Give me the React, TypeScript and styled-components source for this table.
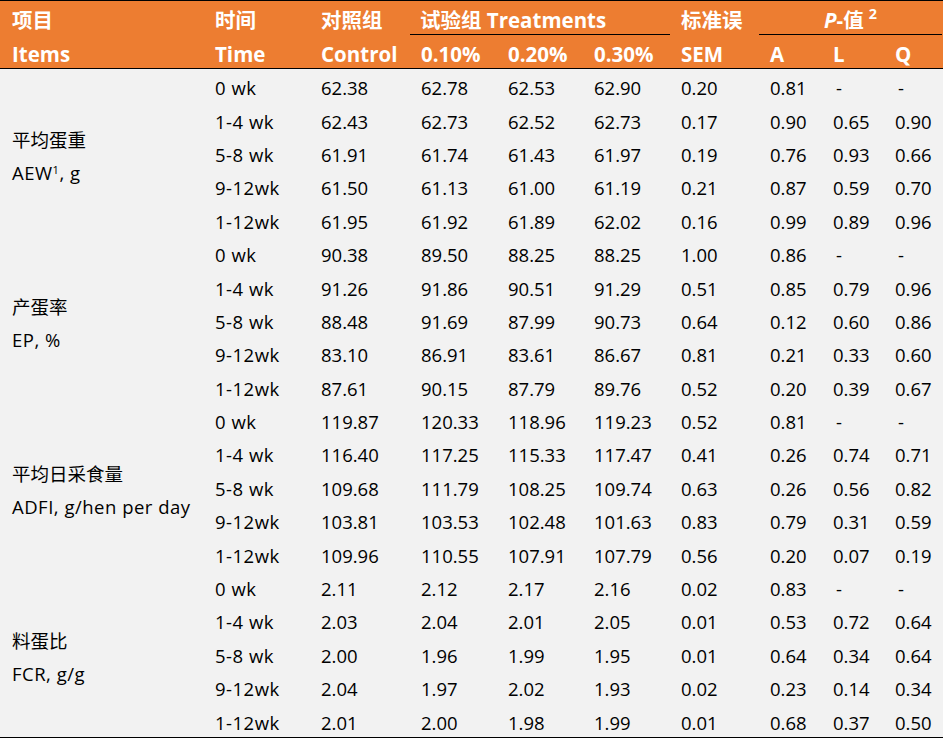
import React from "react";
import styled, { createGlobalStyle } from "styled-components";

const Global = createGlobalStyle`
  html, body { margin: 0; padding: 0; background: #ffffff; }
  body { font-family: "Open Sans", "Noto Sans CJK SC", sans-serif; color: #000; }
`;

const COLS = "205px 106px 100px 87px 86px 87px 89px 63px 62px 58px";

const Table = styled.div`
  width: 943px;
  font-family: "Open Sans", "Noto Sans CJK SC", sans-serif;
`;

const Head = styled.div`
  display: grid;
  grid-template-columns: ${COLS};
  grid-template-rows: 33.5px 33.5px;
  background: #ed7d31;
  border-top: 1px solid #000;
  border-bottom: 1px solid #000;
  color: #fff;
  font-weight: 700;
  font-size: 20.5px;
`;

const HCell = styled.div<{ $span?: number; $center?: boolean; $rule?: boolean; $trim?: boolean }>`
  display: flex;
  align-items: center;
  justify-content: ${(p) => (p.$center ? "center" : "flex-start")};
  padding-left: ${(p) => (p.$center ? "0" : "10px")};
  grid-column: ${(p) => (p.$span ? `span ${p.$span}` : "auto")};
  border-bottom: ${(p) => (p.$rule ? "1px solid #000" : "none")};
  margin-left: ${(p) => (p.$trim ? "-1px" : "0")};
  margin-right: ${(p) => (p.$trim ? "1px" : "0")};
  white-space: nowrap;
  line-height: 1;
  padding-top: 5px;
  box-sizing: border-box;
`;

const FirstHCell = styled(HCell)`
  padding-left: 12px;
`;

const Body = styled.div`
  display: grid;
  grid-template-columns: ${COLS};
  grid-auto-rows: 33.4px;
  background: #f2f2f2;
  border-bottom: 1px solid #000;
  font-size: 18.5px;
`;

const Label = styled.div`
  grid-column: 1;
  grid-row: span 5;
  display: flex;
  flex-direction: column;
  justify-content: center;
  padding-left: 12px;
  padding-top: 7px;
  line-height: 33px;
  white-space: nowrap;
`;

const Latin = styled.span`
  letter-spacing: 0.5px;
`;

const Cell = styled.div<{ $dash?: boolean; $wide?: boolean }>`
  display: flex;
  align-items: center;
  padding-left: ${(p) => (p.$dash ? "13px" : "10px")};
  padding-top: 4px;
  white-space: nowrap;
  box-sizing: border-box;
  letter-spacing: ${(p) => (p.$wide ? "0.5px" : "0")};
`;

const Sup = styled.sup`
  font-size: 0.6em;
  line-height: 0;
  vertical-align: 0.55em;
`;

const HeadSup = styled.sup`
  font-size: 0.7em;
  line-height: 0;
  vertical-align: 0.6em;
  margin-left: 5px;
`;

const Ital = styled.span`
  font-style: italic;
`;

type Row = string[];
type Group = { cn: string; en: React.ReactNode; rows: Row[] };

const groups: Group[] = [
  {
    cn: "平均蛋重",
    en: (
      <>
        AEW<Sup>1</Sup>, g
      </>
    ),
    rows: [
      ["0 wk", "62.38", "62.78", "62.53", "62.90", "0.20", "0.81", "-", "-"],
      ["1-4 wk", "62.43", "62.73", "62.52", "62.73", "0.17", "0.90", "0.65", "0.90"],
      ["5-8 wk", "61.91", "61.74", "61.43", "61.97", "0.19", "0.76", "0.93", "0.66"],
      ["9-12wk", "61.50", "61.13", "61.00", "61.19", "0.21", "0.87", "0.59", "0.70"],
      ["1-12wk", "61.95", "61.92", "61.89", "62.02", "0.16", "0.99", "0.89", "0.96"],
    ],
  },
  {
    cn: "产蛋率",
    en: "EP, %",
    rows: [
      ["0 wk", "90.38", "89.50", "88.25", "88.25", "1.00", "0.86", "-", "-"],
      ["1-4 wk", "91.26", "91.86", "90.51", "91.29", "0.51", "0.85", "0.79", "0.96"],
      ["5-8 wk", "88.48", "91.69", "87.99", "90.73", "0.64", "0.12", "0.60", "0.86"],
      ["9-12wk", "83.10", "86.91", "83.61", "86.67", "0.81", "0.21", "0.33", "0.60"],
      ["1-12wk", "87.61", "90.15", "87.79", "89.76", "0.52", "0.20", "0.39", "0.67"],
    ],
  },
  {
    cn: "平均日采食量",
    en: "ADFI, g/hen per day",
    rows: [
      ["0 wk", "119.87", "120.33", "118.96", "119.23", "0.52", "0.81", "-", "-"],
      ["1-4 wk", "116.40", "117.25", "115.33", "117.47", "0.41", "0.26", "0.74", "0.71"],
      ["5-8 wk", "109.68", "111.79", "108.25", "109.74", "0.63", "0.26", "0.56", "0.82"],
      ["9-12wk", "103.81", "103.53", "102.48", "101.63", "0.83", "0.79", "0.31", "0.59"],
      ["1-12wk", "109.96", "110.55", "107.91", "107.79", "0.56", "0.20", "0.07", "0.19"],
    ],
  },
  {
    cn: "料蛋比",
    en: "FCR, g/g",
    rows: [
      ["0 wk", "2.11", "2.12", "2.17", "2.16", "0.02", "0.83", "-", "-"],
      ["1-4 wk", "2.03", "2.04", "2.01", "2.05", "0.01", "0.53", "0.72", "0.64"],
      ["5-8 wk", "2.00", "1.96", "1.99", "1.95", "0.01", "0.64", "0.34", "0.64"],
      ["9-12wk", "2.04", "1.97", "2.02", "1.93", "0.02", "0.23", "0.14", "0.34"],
      ["1-12wk", "2.01", "2.00", "1.98", "1.99", "0.01", "0.68", "0.37", "0.50"],
    ],
  },
];

export default function App() {
  return (
    <>
      <Global />
      <Table>
        <Head>
          <FirstHCell>项目</FirstHCell>
          <HCell>时间</HCell>
          <HCell>对照组</HCell>
          <HCell $span={3} $rule $trim>
            试验组 Treatments
          </HCell>
          <HCell>标准误</HCell>
          <HCell $span={3} $center $rule $trim>
            <span>
              <Ital>P</Ital>-值<HeadSup>2</HeadSup>
            </span>
          </HCell>
          <FirstHCell>Items</FirstHCell>
          <HCell>Time</HCell>
          <HCell>Control</HCell>
          <HCell>0.10%</HCell>
          <HCell>0.20%</HCell>
          <HCell>0.30%</HCell>
          <HCell>SEM</HCell>
          <HCell>A</HCell>
          <HCell>L</HCell>
          <HCell>Q</HCell>
        </Head>
        <Body>
          {groups.map((g) => (
            <React.Fragment key={g.cn}>
              <Label>
                <span>{g.cn}</span>
                <Latin>{g.en}</Latin>
              </Label>
              {g.rows.map((r, ri) =>
                r.map((v, ci) => (
                  <Cell key={`${g.cn}-${ri}-${ci}`} $dash={v === "-"} $wide={ci === 0}>
                    {v}
                  </Cell>
                ))
              )}
            </React.Fragment>
          ))}
        </Body>
      </Table>
    </>
  );
}
